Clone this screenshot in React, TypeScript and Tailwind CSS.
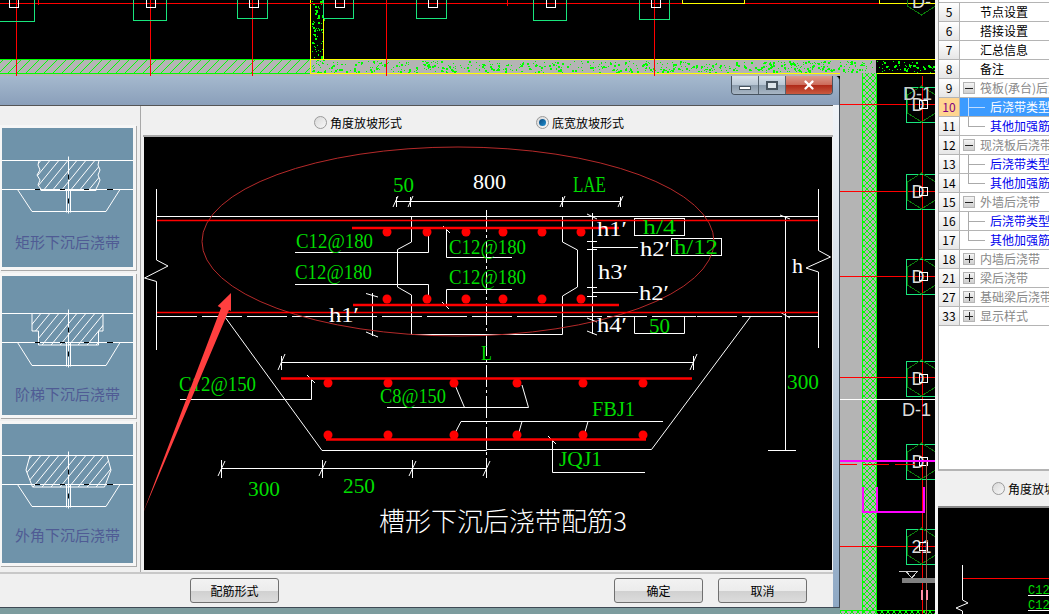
import React from "react";
import { X } from "lucide-react";

// small repeatable noise for the speckled concrete fill
function speckle(x: number, y: number, w: number, h: number, n: number, seed: number) {
  let s = seed;
  const next = () => {
    s = (s * 16807) % 2147483647;
    return s / 2147483647;
  };
  let d = "";
  for (let i = 0; i < n; i++) {
    const px = Math.round(x + next() * w);
    const py = Math.round(y + next() * h);
    const sz = next() > 0.7 ? 2 : 1;
    d += `M${px} ${py}h${sz}v${sz}h-${sz}z`;
  }
  return d;
}

const GREEN = "#00dc00";

function Label({ x, y, w, size = 21, fill = GREEN, children }: { x: number; y: number; w: number; size?: number; fill?: string; children: string }) {
  return (
    <text x={x} y={y} fontSize={size} fill={fill} textLength={w} lengthAdjust="spacingAndGlyphs">
      {children}
    </text>
  );
}

function Pier({ x, w, bottom }: { x: number; w: number; bottom: number }) {
  const c = Math.round(x + w / 2) + 0.5;
  return (
    <g fill="none">
      <path d={`M${x} 0V${bottom}H${x + w}V0`} stroke="#19e67d" />
      <path d={`M${c - 4} 0V7H${c + 5}V0`} stroke="#ffffff" />
    </g>
  );
}

function hexAt(cx: number, y: number) {
  return [-18, -9, 9, 18, 9, -9].map((dy, i) => `${cx + [0, 14, 14, 0, -14, -14][i]},${y + dy}`).join(" ");
}

function Column({ y, label, w = 30 }: { y: number; label: string; w?: number }) {
  const cx = 921.5;
  return (
    <g>
      <rect x={cx - 15.5} y={y - 17} width={w + 4} height={35} fill="none" stroke="#19e67d" />
      <polygon points={hexAt(cx, y)} fill="none" stroke="#0b7a0b" />
      <text x={cx - 10} y={y + 7} fontSize={18} fill="#dddddd" className="font-['Liberation_Sans',sans-serif]">
        {label}
      </text>
      <rect x={cx - 2} y={y - 4} width={8} height={8} fill="none" stroke="#ffffff" />
    </g>
  );
}

function CadBackground() {
  return (
    <svg className="absolute inset-0" width={935} height={614} viewBox="0 0 935 614" shapeRendering="crispEdges">
      <defs>
        <pattern id="hatch" width="9" height="9" patternUnits="userSpaceOnUse">
          <path d="M0 9L9 0" stroke="#00ff00" strokeWidth="1" />
        </pattern>
        <pattern id="cross" width="6" height="6" patternUnits="userSpaceOnUse">
          <path d="M0 6L6 0M0 0L6 6" stroke="#00ff00" strokeWidth="1" />
        </pattern>
      </defs>
      {/* top band */}
      <rect x={0} y={60} width={310} height={16} fill="#b4b4b4" />
      <rect x={0} y={60} width={310} height={13} fill="url(#hatch)" />
      <path d="M0 59.5H310M0 73.5H310" stroke="#00ff00" />
      <rect x={310} y={60} width={566} height={16} fill="#b4b4b4" />
      <path d={speckle(312, 61, 562, 11, 620, 7)} fill="#00ff00" />
      <path d={speckle(312, 0, 11, 59, 70, 11)} fill="#00ff00" />
      <path d={speckle(877, 61, 58, 11, 60, 23)} fill="#00ff00" />
      <path d="M310.5 0V73.5H935M323.5 0V59.5M310 59.5H935" fill="none" stroke="#ffff00" />
      {/* axes */}
      <path
        d="M0 3.5H935M16.5 0V76M150.5 0V76M252.5 0V76M386.5 0V76M654.5 0V76M507.5 0V6M38.5 0V5M133.5 0V5"
        stroke="#ff0000"
      />
      <Pier x={-8} w={42.5} bottom={21} />
      <Pier x={133.5} w={33} bottom={20} />
      <Pier x={237.5} w={30} bottom={18} />
      <Pier x={323.5} w={30} bottom={18} />
      <Pier x={416.5} w={30} bottom={18} />
      <Pier x={533.5} w={33} bottom={20} />
      <Pier x={639.5} w={30} bottom={19} />
      <path d="M682.5 0V3.5H744.5V0M879.5 0V3.5H935" fill="none" stroke="#ffff00" />
      <polygon points={hexAt(921.5, -3)} fill="none" stroke="#0b7a0b" />
      <text x={912} y={8} fontSize={18} fill="#dddddd" className="font-['Liberation_Sans',sans-serif]">
        D-
      </text>
      {/* right hand strip */}
      <rect x={840} y={73} width={23} height={541} fill="#b4b4b4" />
      <rect x={863} y={73} width={13} height={541} fill="#b4b4b4" />
      <rect x={863} y={73} width={13} height={541} fill="url(#cross)" />
      <path d="M862.5 73V614M876.5 73V614" stroke="#00ff00" />
      <rect x={840} y={610} width={95} height={4} fill="url(#cross)" />
      <path d="M840 610.5H935" stroke="#00ff00" />
      <path d="M840 104.5H935M840 191.5H935M840 276.5H935M840 377.5H935M840 546.5H935M922.5 76V614" stroke="#ff0000" />
      <path d="M840 399.5H935" stroke="#ffffff" />
      <Column y={104} label="D" />
      <Column y={191} label="D" />
      <Column y={276} label="D" />
      <Column y={378} label="D" />
      <Column y={461} label="D" />
      <Column y={546} label="21" />
      <text x={903} y={100} fontSize={18} fill="#cccccc" className="font-['Liberation_Sans',sans-serif]">
        D-1
      </text>
      <rect x={895} y={400} width={40} height={18} fill="#000000" />
      <path d="M922.5 400V418" stroke="#ff0000" />
      <text x={902} y={416} fontSize={18} fill="#dddddd" className="font-['Liberation_Sans',sans-serif]">
        D-1
      </text>
      <path d="M926.5 460V614" stroke="#a06050" />
      <path d="M840 464.5H857M863 464.5H889M895 464.5H915" stroke="#ff0000" />
      <path d="M840 460.5H935" stroke="#ff00ff" strokeWidth="2" />
      <path d="M862.5 487V511.5H923.5V487M876.5 487V511.5" fill="none" stroke="#ff00ff" strokeWidth="2" />
      <rect x={902} y={578} width={33} height={5} fill="#808080" />
      <path d="M899 571.5H917L912 578L906 571.5" fill="none" stroke="#cccccc" />
      <rect x={921} y={590} width={2} height={10} fill="#ff8fa8" />
      <rect x={926} y={590} width={2} height={10} fill="#ff8fa8" />
      {/* window shadow at the foot of the dialog */}
      <rect x={0} y={608} width={840} height={6} fill="#7d9c9e" />
    </svg>
  );
}

function Detail() {
  const topDots = [387, 427, 466, 503, 542, 581];
  const lowDots = [328, 388, 454, 517, 583, 643];
  return (
    <svg className="block" width={688} height={433} viewBox="144 137 688 433">
      <g fill="none" stroke="#ffffff">
        {/* slab, steps and outline */}
        <path d="M157 216.5H818" />
        <path d="M156.5 189V260L168 266L144.5 278L156.5 281.5V350" />
        <path d="M818.5 189V250.5L830.5 257L806 268L818.5 272V348" />
        <path d="M411.5 216V242L397.5 249.5V287L411.5 295V334.5H562.5V296L577.5 287V250L562.5 242V216" />
        <path d="M225 317L322 450.5H486.5V449.5H651.5L751 316" />
        <path d="M157 316.5H818" strokeDasharray="40 5" />
        <path d="M486.5 210V478" strokeDasharray="22 3 3 3" />
        {/* dimensions */}
        <path d="M395.5 201.5H620.5M396.5 197V207M410.5 197V207M562.5 197V207M620.5 197V207M393 207L398 196M408 207L413 196M560 207L565 196M618 207L623 196" />
        <path d="M592.5 213V334M587 214L597 219M587 241.5H597M587 249.5H597M587 287.5H597M587 296.5H597M587 318L597 322M587 331L597 335" />
        <path d="M592 247.5H638M592 292.5H638" />
        <path d="M372.5 293V336M366 293.5L378 297M366 332L378 337" />
        <path d="M785.5 216V450.5M768 450.5H796M780 215L790 219M780 312L790 318" />
        <path d="M281.5 362.5H693.5M281.5 356V370M693.5 356V370M278 370L285 354M690 370L697 354" />
        <path d="M221.5 468.5H486.5M221.5 460V478M322.5 460V478M412.5 460V478M486.5 460V478M218 476L225 461M319 476L326 461M409 476L416 461M483 476L490 461" />
        {/* leaders */}
        <path d="M295 252.5H428.5V232M295 284.5H428.5V299" />
        <path d="M443 226L450 233M446.5 228V257.5H512M512 289.5H446.5V305M442 302L449 309" />
        <path d="M180 399.5H311.5V379M307 375L315 383" />
        <path d="M387 407.5H528.5L522 385M464.5 407.5L455 385" />
        <path d="M454 435L461 421.5H663M519 432L522 421.5M585 432L588 421.5" />
        <path d="M552.5 440V472.5H645M548 436L556 444" />
        {/* value boxes */}
        <rect x={634.5} y={218.5} width={50} height={17} />
        <rect x={671.5} y={238.5} width={50} height={17} />
        <path d="M634.5 316.5V333.5H684.5V316.5M684 316.5H696" />
      </g>

      <ellipse cx={458} cy={241.5} rx={256} ry={94.5} fill="none" stroke="#b52a2a" />

      <g stroke="#ff0000" fill="none">
        <path d="M157 220.5H818M157 312.5H818" strokeWidth="1.5" />
        <path d="M352 228H619M353 305H619M281 378.5H692M326 439.5H646" strokeWidth="2.5" />
      </g>
      <g fill="#ff0000">
        {topDots.map((x) => (
          <circle key={`a${x}`} cx={x} cy={232} r={4.5} />
        ))}
        {topDots.map((x) => (
          <circle key={`b${x}`} cx={x} cy={299} r={4.5} />
        ))}
        {lowDots.map((x) => (
          <circle key={`c${x}`} cx={x} cy={383} r={4.5} />
        ))}
        {lowDots.map((x) => (
          <circle key={`d${x}`} cx={x} cy={435} r={4.5} />
        ))}
      </g>

      <g className="font-['Liberation_Serif',serif]">
        <Label x={393} y={192} w={21}>50</Label>
        <Label x={473} y={189} w={33} fill="#ffffff">800</Label>
        <Label x={573} y={192} w={33} size={23}>LAE</Label>
        <Label x={296} y={248} w={77}>C12@180</Label>
        <Label x={295} y={279} w={77}>C12@180</Label>
        <Label x={449} y={254} w={77}>C12@180</Label>
        <Label x={449} y={284} w={77}>C12@180</Label>
        <Label x={597} y={236} w={30} fill="#ffffff">h1′</Label>
        <Label x={640} y={256} w={30} fill="#ffffff">h2′</Label>
        <Label x={598} y={279} w={30} fill="#ffffff">h3′</Label>
        <Label x={639} y={300} w={30} fill="#ffffff">h2′</Label>
        <Label x={597} y={332} w={30} fill="#ffffff">h4′</Label>
        <Label x={329} y={322} w={30} fill="#ffffff">h1′</Label>
        <Label x={643} y={234} w={33}>h/4</Label>
        <Label x={674} y={254} w={44}>h/12</Label>
        <Label x={649} y={333} w={21}>50</Label>
        <Label x={792} y={273} w={11} fill="#ffffff">h</Label>
        <Label x={787} y={389} w={32}>300</Label>
        <Label x={481} y={360} w={11}>L</Label>
        <Label x={179} y={391} w={77}>C12@150</Label>
        <Label x={380} y={403} w={66}>C8@150</Label>
        <Label x={592} y={416} w={43}>FBJ1</Label>
        <Label x={559} y={466} w={43}>JQJ1</Label>
        <Label x={248} y={496} w={32}>300</Label>
        <Label x={343} y={493} w={32}>250</Label>
      </g>
      <text x={379} y={531} fontSize={26} fill="#ffffff" className="font-['Noto_Sans_CJK_SC',sans-serif] font-light">
        槽形下沉后浇带配筋3
      </text>

      <polygon points="231,293 217.7,306 221,308 143,513 229,310 231,311" fill="#ff3f3f" />
    </svg>
  );
}

type CardProps = {
  label: string;
  top: number;
  bottom: number;
  shape: string;
  trough: number;
  labelClass: string;
};

function StyleCard({ label, top, bottom, shape, trough, labelClass }: CardProps) {
  const clipId = `clip-${top}-${bottom}`;
  return (
    <div className="h-[145px] w-[136px] border-y-[3px] border-l-2 border-r-[3px] border-[#f6f6f6] bg-[#6f93aa] shadow-[1px_1px_0_#a9a9a9]">
      <svg className="block" width={131} height={100} viewBox="0 0 131 100" fill="none" stroke="#ffffff">
        <defs>
          <clipPath id={clipId}>
            <polygon points={shape} />
          </clipPath>
        </defs>
        <path d={`M0 ${top}H131M0 ${bottom}H131`} />
        <g clipPath={`url(#${clipId})`}>
          {Array.from({ length: 20 }, (_, i) => (
            <path key={i} d={`M${i * 9 - 20} ${bottom + 10}L${i * 9 + 20} ${top - 10}`} />
          ))}
        </g>
        <polygon points={shape} />
        <path d={`M15.5 ${bottom}L30 ${bottom + trough}H104L118 ${bottom}`} />
        <path d={`M66.5 ${top - 4}V${bottom + trough + 2}M64.5 ${bottom}V${bottom + trough + 1}M68.5 ${bottom}V${bottom + trough + 1}`} />
        <path
          d={`M33 ${bottom}H38M58 ${bottom}H63M82 ${bottom}H87M105 ${bottom}H111M66.5 ${top + 14}V${top + 19}M66.5 ${bottom + 9}V${bottom + 14}`}
          stroke="#000000"
        />
      </svg>
      <div className={`text-center text-[15px] leading-[20px] text-[#4f5b94] ${labelClass}`}>{label}</div>
    </div>
  );
}

function Radio({ checked }: { checked?: boolean }) {
  return (
    <span className="flex h-[13px] w-[13px] shrink-0 items-center justify-center rounded-full border border-[#9a9a9a] bg-gradient-to-br from-[#d8d8d8] to-[#f8f8f8]">
      {checked ? <span className="h-[7px] w-[7px] rounded-full bg-gradient-to-br from-[#0a4a80] to-[#1f8fd0]" /> : null}
    </span>
  );
}

function WinButton({ text, className = "" }: { text: string; className?: string }) {
  return (
    <button
      className={`flex h-[25px] w-[89px] items-center justify-center rounded-[3px] border border-[#707070] bg-[linear-gradient(#f2f2f2_0%,#ececec_50%,#d0d0d0_52%,#dcdcdc_100%)] text-[12px] text-black ${className}`}
    >
      {text}
    </button>
  );
}

function Dialog() {
  return (
    <div className="absolute left-0 top-[76px] flex h-[532px] w-[840px] flex-col overflow-hidden rounded-tr-[5px] border-r border-b border-[#3f4a55] bg-[#8ea8c4]">
      <div className="flex h-[29px] shrink-0 justify-end bg-gradient-to-b from-[#a5b9ce] to-[#8a9fba] pr-[6px]">
        <div className="flex h-[19px] overflow-hidden rounded-b-[4px] border border-t-0 border-[#47535f]">
          <div className="flex w-[27px] items-end justify-center border-r border-[#56636f] bg-[linear-gradient(#d6dfe8_0%,#b8c6d4_50%,#8c9cac_52%,#a8b6c4_100%)] pb-[4px]">
            <span className="h-[4px] w-[12px] border border-[#48545f] bg-white" />
          </div>
          <div className="flex w-[27px] items-center justify-center border-r border-[#56636f] bg-[linear-gradient(#d6dfe8_0%,#b8c6d4_50%,#8c9cac_52%,#a8b6c4_100%)]">
            <span className="h-[9px] w-[12px] border-2 border-[#48545f] bg-[#dfe6ec]" />
          </div>
          <div className="flex w-[46px] items-center justify-center bg-[linear-gradient(#dc9a8c_0%,#cc6a58_50%,#b02a18_52%,#c85a40_100%)]">
            <X size={14} strokeWidth={4} className="text-white" />
          </div>
        </div>
      </div>

      <div className="flex min-h-0 flex-1">
        <div className="flex h-full w-[833px] flex-col border-t border-[#555555] bg-[#f0f0f0]">
          <div className="flex min-h-0 flex-1">
            <div className="flex w-[141px] shrink-0 flex-col gap-[3px] border-r border-[#a8a8a8] pt-[19px]">
              <StyleCard
                label="矩形下沉后浇带"
                top={32.5}
                bottom={61.5}
                trough={22}
                shape="37,32.5 97,32.5 96,37 98,42 96,47 98,52 96,57 94,61 94,62.5 39,62.5 39,61 36,57 38,52 35,47 38,42 36,37"
                labelClass="pt-[4px]"
              />
              <StyleCard
                label="阶梯下沉后浇带"
                top={37.5}
                bottom={66.5}
                trough={23}
                shape="30,37.5 101,37.5 101,55 96.5,55 96.5,69 36.5,69 36.5,55 30,55"
                labelClass="pt-[8px]"
              />
              <StyleCard
                label="外角下沉后浇带"
                top={31.5}
                bottom={60.5}
                trough={22}
                shape="28,31.5 105,31.5 109,46 102.5,63 30.5,63 24,46"
                labelClass="pt-[1px]"
              />
            </div>
            <div className="flex min-w-0 flex-1 flex-col pl-[2px] pt-[2px]">
              <div className="flex h-[29px] shrink-0 items-center border-b-2 border-[#a8a8a8] bg-[#f0f0f0] pt-[2px] text-[12px] text-black">
                <span className="ml-[171px]">
                  <Radio />
                </span>
                <span className="ml-[3px]">角度放坡形式</span>
                <span className="ml-[134px]">
                  <Radio checked />
                </span>
                <span className="ml-[3px]">底宽放坡形式</span>
              </div>
              <div className="ml-px h-[433px] w-[688px] overflow-hidden bg-black">
                <Detail />
              </div>
            </div>
          </div>
          <div className="flex h-[35px] shrink-0 items-center border-t-2 border-[#c8c8c8] pl-[190px] pr-[26px]">
            <WinButton text="配筋形式" />
            <WinButton text="确定" className="ml-auto" />
            <WinButton text="取消" className="ml-[15px]" />
          </div>
        </div>
        <div className="w-[6px] bg-gradient-to-b from-[#f0f4f8] via-[#c8d5e2] to-[#8ea8c4]" />
      </div>
    </div>
  );
}

type Row = { n: number; text: string; kind: "plain" | "open" | "closed" | "child" | "childLast"; selected?: boolean };

const rows: Row[] = [
  { n: 5, text: "节点设置", kind: "plain" },
  { n: 6, text: "搭接设置", kind: "plain" },
  { n: 7, text: "汇总信息", kind: "plain" },
  { n: 8, text: "备注", kind: "plain" },
  { n: 9, text: "筏板(承台)后浇带", kind: "open" },
  { n: 10, text: "后浇带类型", kind: "child", selected: true },
  { n: 11, text: "其他加强筋", kind: "childLast" },
  { n: 12, text: "现浇板后浇带", kind: "open" },
  { n: 13, text: "后浇带类型", kind: "child" },
  { n: 14, text: "其他加强筋", kind: "childLast" },
  { n: 15, text: "外墙后浇带", kind: "open" },
  { n: 16, text: "后浇带类型", kind: "child" },
  { n: 17, text: "其他加强筋", kind: "childLast" },
  { n: 18, text: "内墙后浇带", kind: "closed" },
  { n: 21, text: "梁后浇带", kind: "closed" },
  { n: 27, text: "基础梁后浇带", kind: "closed" },
  { n: 33, text: "显示样式", kind: "closed" },
];

function TreeBox({ open }: { open: boolean }) {
  return (
    <span className="absolute left-[3px] top-[3px] flex h-[12px] w-[12px] items-center justify-center border border-[#b4b4b4] bg-gradient-to-b from-[#f4f4f4] to-[#cfcfcf]">
      <span className="relative h-px w-[8px] bg-[#222222]">
        {open ? null : <span className="absolute left-[3.5px] top-[-3.5px] h-[8px] w-px bg-[#222222]" />}
      </span>
    </span>
  );
}

function ParamRow({ row }: { row: Row }) {
  const child = row.kind === "child" || row.kind === "childLast";
  const tree = row.kind === "open" || row.kind === "closed";
  return (
    <div className="flex h-[19px] border-b border-[#b4b4b4] text-[12px] leading-[18px]">
      <div
        className={`w-[21px] shrink-0 border-r border-[#b4b4b4] text-center ${
          row.selected ? "bg-[#ffd590] text-[#800080]" : "bg-gradient-to-b from-[#ffffff] to-[#e6e6e6] text-black"
        }`}
      >
        {row.n}
      </div>
      <div className={`relative min-w-0 flex-1 overflow-hidden whitespace-nowrap ${row.selected ? "bg-[#3c9bff]" : ""}`}>
        {tree ? <TreeBox open={row.kind === "open"} /> : null}
        {child ? (
          <>
            <span className={`absolute left-[8px] top-0 w-px ${row.kind === "child" ? "h-[19px]" : "h-[9px]"} ${row.selected ? "bg-[#c0dcff]" : "bg-[#aaaaaa]"}`} />
            <span className={`absolute left-[8px] top-[9px] h-px w-[17px] ${row.selected ? "bg-[#c0dcff]" : "bg-[#aaaaaa]"}`} />
          </>
        ) : null}
        <span
          className={`absolute top-0 ${child ? "left-[30px]" : "left-[20px]"} ${
            row.selected ? "text-white" : child ? "text-[#0000ee]" : tree ? "text-[#888888]" : "text-black"
          }`}
        >
          {row.text}
        </span>
      </div>
    </div>
  );
}

function SidePanel() {
  return (
    <div className="flex h-full w-[114px] shrink-0 flex-col border-l-[3px] border-l-[#f4f4f4]">
      <div className="flex h-[471px] shrink-0 flex-col border-b-2 border-[#b4b4b4] border-l border-l-[#a0a0a0] bg-white">
        <div className="h-[3px] border-b border-[#b4b4b4]" />
        {rows.map((row) => (
          <ParamRow key={row.n} row={row} />
        ))}
      </div>
      <div className="flex h-[37px] shrink-0 items-center overflow-hidden whitespace-nowrap border-b-2 border-[#8a8a8a] bg-[#f0f0f0] pl-[54px] text-[12px] text-black">
        <Radio />
        <span className="ml-[3px]">角度放坡形式</span>
      </div>
      <div className="min-h-0 flex-1 bg-black">
        <svg className="block" width={111} height={106} viewBox="938 508 111 106" fill="none" stroke="#ffffff">
          <path d="M962.5 565V600L968 603L956 608L962.5 611V614" />
          <path d="M963 578.5H1049" stroke="#ff0000" />
          <path d="M1028 595.5H1049M1028 610.5H1049" />
          <g fill="#00dc00" stroke="none" fontSize={12} className="font-['Liberation_Mono',monospace]">
            <text x={1028} y={594}>C12@</text>
            <text x={1028} y={609}>C12@</text>
          </g>
        </svg>
      </div>
    </div>
  );
}

export default function App() {
  return (
    <div className="flex h-[614px] w-[1049px] overflow-hidden bg-black font-['Noto_Sans_CJK_SC','Liberation_Sans',sans-serif]">
      <div className="relative h-full w-[935px] shrink-0">
        <CadBackground />
        <Dialog />
      </div>
      <SidePanel />
    </div>
  );
}
